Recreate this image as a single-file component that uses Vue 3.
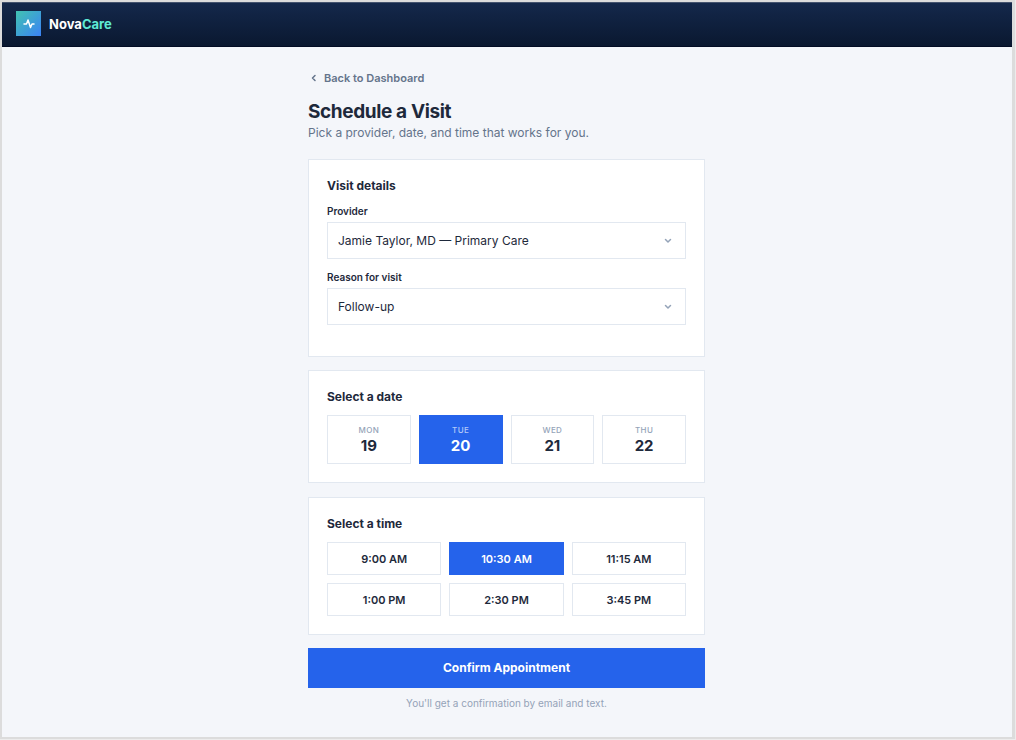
<script setup>
import { ref } from 'vue'

const provider = ref('Jamie Taylor, MD — Primary Care')
const providers = ['Jamie Taylor, MD — Primary Care']
const reason = ref('Follow-up')
const reasons = ['Follow-up']

const days = [
  { name: 'MON', number: 19 },
  { name: 'TUE', number: 20 },
  { name: 'WED', number: 21 },
  { name: 'THU', number: 22 },
]
const times = ['9:00 AM', '10:30 AM', '11:15 AM', '1:00 PM', '2:30 PM', '3:45 PM']
const day = ref(20)
const time = ref('10:30 AM')
</script>

<template>
  <div class="page">
    <header class="topbar">
      <span class="logo">
        <svg viewBox="0 0 24 24" width="12" height="12" aria-hidden="true">
          <path d="M2 12h5l3-8 5 15 3-7h4" fill="none" stroke="#fff" stroke-width="3" stroke-linecap="round" stroke-linejoin="round" />
        </svg>
      </span>
      <span class="brand">Nova<span class="accent">Care</span></span>
    </header>

    <main class="content">
      <div class="column">
        <a class="back" href="#">
          <svg viewBox="0 0 24 24" width="12" height="12" aria-hidden="true">
            <path d="M14 7l-5 5 5 5" fill="none" stroke="currentColor" stroke-width="3" stroke-linecap="round" stroke-linejoin="round" />
          </svg>
          Back to Dashboard
        </a>
        <h1>Schedule a Visit</h1>
        <p class="lead">Pick a provider, date, and time that works for you.</p>

        <section class="card details">
          <h2>Visit details</h2>
          <div class="field">
            <label for="provider">Provider</label>
            <div class="select">
              <select id="provider" v-model="provider">
                <option v-for="p in providers" :key="p">{{ p }}</option>
              </select>
              <svg viewBox="0 0 24 24" width="12" height="12" aria-hidden="true">
                <path d="M7 9l5 5 5-5" fill="none" stroke="currentColor" stroke-width="3" stroke-linecap="round" stroke-linejoin="round" />
              </svg>
            </div>
          </div>
          <div class="field">
            <label for="reason">Reason for visit</label>
            <div class="select">
              <select id="reason" v-model="reason">
                <option v-for="r in reasons" :key="r">{{ r }}</option>
              </select>
              <svg viewBox="0 0 24 24" width="12" height="12" aria-hidden="true">
                <path d="M7 9l5 5 5-5" fill="none" stroke="currentColor" stroke-width="3" stroke-linecap="round" stroke-linejoin="round" />
              </svg>
            </div>
          </div>
        </section>

        <section class="card">
          <h2>Select a date</h2>
          <div class="days">
            <button
              v-for="d in days"
              :key="d.number"
              type="button"
              class="day"
              :class="{ active: d.number === day }"
              :aria-pressed="d.number === day"
              @click="day = d.number"
            >
              <span class="day-name">{{ d.name }}</span>
              <span class="day-number">{{ d.number }}</span>
            </button>
          </div>
        </section>

        <section class="card">
          <h2>Select a time</h2>
          <div class="times">
            <button
              v-for="t in times"
              :key="t"
              type="button"
              class="time"
              :class="{ active: t === time }"
              :aria-pressed="t === time"
              @click="time = t"
            >
              {{ t }}
            </button>
          </div>
        </section>

        <button type="button" class="confirm">Confirm Appointment</button>
        <p class="note">You'll get a confirmation by email and text.</p>
      </div>
    </main>
  </div>
</template>

<style>
body {
  background: #ececec;
}
</style>

<style scoped>
.page {
  box-sizing: border-box;
  min-height: calc(100vh - 1px);
  margin: 0 1px 1px 0;
  border: 2px solid #dcdcdc;
  border-right-width: 3px;
  background: #f4f6fa;
  color: #1e293b;
  font-family: Inter, "Liberation Sans", sans-serif;
}
.topbar {
  display: flex;
  align-items: center;
  gap: 8px;
  box-sizing: border-box;
  height: 45px;
  padding: 0 14px 2px;
  background: linear-gradient(#14284b, #0a1830);
  border-top: 1px solid #44536e;
  border-bottom: 1px solid #020c24;
}
.logo {
  display: flex;
  align-items: center;
  justify-content: center;
  width: 25px;
  height: 25px;
  background: linear-gradient(135deg, #41c3b1, #3b82f6);
}
.brand {
  color: #fff;
  font-size: 13px;
  font-weight: 700;
  line-height: 18px;
}
.accent {
  color: #5eead4;
}
.content {
  padding: 24px 17px 24px 16px;
}
.column {
  max-width: 397px;
  margin: 0 auto;
}
.back {
  display: flex;
  align-items: center;
  gap: 4px;
  line-height: 14px;
  color: #64748b;
  font-size: 11px;
  font-weight: 600;
  text-decoration: none;
}
h1 {
  margin: 15px 0 1px;
  font-size: 19px;
  font-weight: 700;
  line-height: 24px;
  letter-spacing: -0.02em;
}
.lead {
  margin: 0 0 18px;
  color: #64748b;
  font-size: 12px;
  line-height: 16px;
}
.card {
  margin-bottom: 14px;
  padding: 18px;
  background: #fff;
  border: 1px solid #e2e8f0;
}
.details {
  margin-bottom: 13px;
  padding-bottom: 31px;
}
h2 {
  margin: 0 0 10px;
  font-size: 12px;
  font-weight: 700;
  line-height: 16px;
}
.field + .field {
  margin-top: 11px;
}
label {
  display: block;
  margin-bottom: 4px;
  font-size: 10px;
  font-weight: 600;
  line-height: 14px;
}
.select {
  display: grid;
  align-items: center;
}
.select > * {
  grid-area: 1 / 1;
}
.select svg {
  justify-self: end;
  margin-right: 12px;
  color: #94a3b8;
  pointer-events: none;
}
select {
  box-sizing: border-box;
  width: 100%;
  height: 37px;
  padding: 0 30px 0 10px;
  appearance: none;
  background: #fff;
  border: 1px solid #e2e8f0;
  border-radius: 0;
  color: #1e293b;
  font: 400 12px/16px Inter, "Liberation Sans", sans-serif;
}
.days,
.times {
  display: grid;
  grid-template-columns: repeat(4, 1fr);
  gap: 8px;
}
.times {
  grid-template-columns: repeat(3, 1fr);
}
button {
  box-sizing: border-box;
  padding: 0;
  background: #fff;
  border: 1px solid #e2e8f0;
  color: #1e293b;
  font-family: inherit;
  cursor: pointer;
}
.day {
  display: flex;
  flex-direction: column;
  align-items: center;
  justify-content: center;
  height: 49px;
}
.day-name {
  color: #94a3b8;
  font-size: 8px;
  font-weight: 500;
  line-height: 12px;
  letter-spacing: 0.05em;
}
.day-number {
  font-size: 15px;
  font-weight: 700;
  line-height: 19px;
}
.time {
  height: 33px;
  font-size: 11px;
  font-weight: 600;
}
.active {
  background: #2563eb;
  border-color: #2563eb;
  color: #fff;
}
.active .day-name {
  color: #b4c9f8;
}
.confirm {
  display: block;
  width: 100%;
  height: 40px;
  margin-top: -1px;
  padding-bottom: 2px;
  background: #2563eb;
  border-color: #2563eb;
  color: #fff;
  font-size: 12px;
  font-weight: 700;
}
.note {
  margin: 8px 0 0;
  color: #94a3b8;
  font-size: 10px;
  line-height: 14px;
  text-align: center;
}
</style>
